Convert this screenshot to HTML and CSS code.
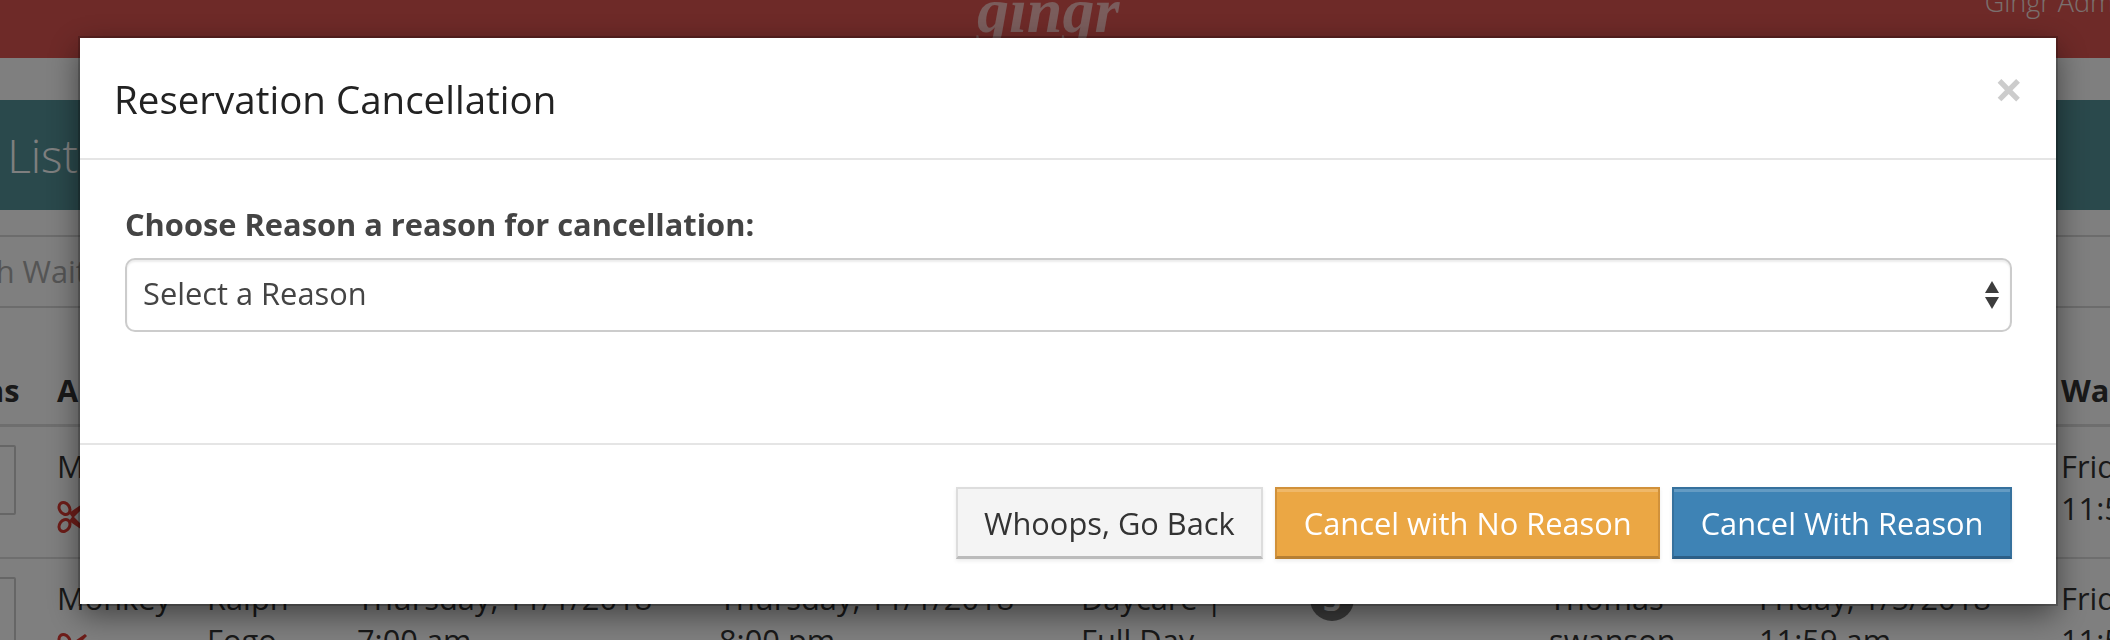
FILE: index.html
```html
<!DOCTYPE html>
<html lang="en">
	<head>
		<meta charset="UTF-8" />
		<meta name="viewport" content="width=device-width, initial-scale=1.0" />
		<title>Reservation Cancellation</title>
		<link rel="stylesheet" href="styles.css">
	</head>
	<body>
		<div class="topbar">
			<span class="logo">gingr</span>
			<span class="user">Gingr Admin</span>
		</div>
		<div class="titlebar"><h1>Wait List</h1></div>
		<div class="search">Search Waitlist</div>

		<div class="row head">
			<div class="lead">Actions</div>
			<div>Animal</div>
			<div>Owner</div>
			<div>Start</div>
			<div>End</div>
			<div>Type</div>
			<div>Count</div>
			<div>Staff</div>
			<div>Expires</div>
			<div>Waitlisted</div>
		</div>
		<div class="row">
			<div><span class="box"></span></div>
			<div>
				Monkey
				<svg class="cut" viewBox="0 0 30 32"><use href="#scissors"></use></svg>
			</div>
			<div>Ralph<br>Fogo</div>
			<div>Thursday, 11/1/2018<br>7:00 am</div>
			<div>Thursday, 11/1/2018<br>8:00 pm</div>
			<div>Daycare |<br>Full Day</div>
			<div><span class="badge">3</span></div>
			<div>Thomas<br>swanson</div>
			<div>Friday, 1/5/2018<br>11:59 am</div>
			<div>Friday<br>11:59 am</div>
		</div>
		<div class="row">
			<div><span class="box"></span></div>
			<div>
				Monkey
				<svg class="cut" viewBox="0 0 30 32"><use href="#scissors"></use></svg>
			</div>
			<div>Ralph<br>Fogo</div>
			<div>Thursday, 11/1/2018<br>7:00 am</div>
			<div>Thursday, 11/1/2018<br>8:00 pm</div>
			<div>Daycare |<br>Full Day</div>
			<div><span class="badge">3</span></div>
			<div>Thomas<br>swanson</div>
			<div>Friday, 1/5/2018<br>11:59 am</div>
			<div>Friday<br>11:59 am</div>
		</div>

		<svg class="defs" width="0" height="0">
			<symbol id="scissors" viewBox="0 0 30 32">
				<g fill="none" stroke="currentColor" stroke-width="3">
					<ellipse cx="7.5" cy="7.5" rx="5" ry="6.4" transform="rotate(-35 7.5 7.5)"></ellipse>
					<ellipse cx="7.5" cy="24.5" rx="5" ry="6.4" transform="rotate(35 7.5 24.5)"></ellipse>
				</g>
				<path fill="currentColor" d="M12 12 L28 1 L30 3 L17 16 L30 29 L28 31 L12 20 L15 16 Z"></path>
			</symbol>
		</svg>

		<div class="backdrop">
			<div class="modal">
				<div class="modal-header">
					<h4>Reservation Cancellation</h4>
					<span class="close">×</span>
				</div>
				<div class="modal-body">
					<label>Choose Reason a reason for cancellation:</label>
					<div class="select">
						<span>Select a Reason</span>
						<svg class="arrows" viewBox="0 0 14 28">
							<path d="M7 0 L14 12 L0 12 Z"></path>
							<path d="M0 16 L14 16 L7 28 Z"></path>
						</svg>
					</div>
				</div>
				<div class="modal-footer">
					<button class="btn">Whoops, Go Back</button>
					<button class="btn btn-warning">Cancel with No Reason</button>
					<button class="btn btn-primary">Cancel With Reason</button>
				</div>
			</div>
		</div>
	</body>
</html>
```

FILE: styles.css
```css
* {
	box-sizing: border-box;
}
body {
	margin: 0;
	height: 640px;
	overflow: hidden;
	background: #fff;
	color: #333;
	font-family: "Open Sans", sans-serif;
	font-size: 30.8px;
}
.topbar {
	display: flex;
	justify-content: space-between;
	height: 58px;
	padding-left: 977px;
	background: #dd5450;
	overflow: hidden;
}
.logo {
	margin-top: -29px;
	font-family: "Liberation Serif", serif;
	font-size: 64px;
	font-style: italic;
	font-weight: 700;
	line-height: 80px;
	color: #f4bab8;
}
.user {
	margin-top: -16px;
	margin-right: -26px;
	font-size: 27px;
	font-weight: 300;
	line-height: 36px;
	color: #f5e0df;
}
.titlebar {
	height: 110px;
	margin-top: 42px;
	background: #549298;
	overflow: hidden;
}
.titlebar h1 {
	margin: 0 0 0 -96px;
	font-size: 46px;
	font-weight: 300;
	line-height: 110px;
	color: #fff;
}
.search {
	height: 73px;
	margin-top: 25px;
	border-top: 2px solid #d8d8d8;
	border-bottom: 2px solid #d8d8d8;
	text-indent: -83px;
	line-height: 68px;
	color: #aaa;
}
.row {
	display: grid;
	grid-template-columns: 57px 150px 150px 362px 362px 229px 239px 210px 302px 1fr;
	height: 132px;
	padding-top: 18px;
	border-bottom: 2px solid #ddd;
	line-height: 42px;
	white-space: nowrap;
}
.head {
	height: 119px;
	padding-top: 61px;
	border-bottom-width: 3px;
	font-weight: 700;
}
.lead {
	margin-left: -95px;
}
.box {
	display: block;
	width: 100px;
	height: 70px;
	margin-left: -84px;
	border: 2px solid #ccc;
	border-radius: 2px;
}
.cut {
	display: block;
	width: 30px;
	height: 32px;
	margin-top: 14px;
	color: #dc3a32;
}
.badge {
	display: block;
	width: 44px;
	height: 44px;
	border-radius: 50%;
	background: #777;
	color: #fff;
	font-weight: 700;
	line-height: 44px;
	text-align: center;
}
.defs {
	display: block;
	height: 0;
}
.backdrop {
	position: fixed;
	top: 0;
	left: 0;
	width: 100%;
	height: 100%;
	padding: 38px 54px 0 80px;
	background: rgba(0, 0, 0, 0.5);
}
.modal {
	height: 566px;
	background: #fff;
	box-shadow: 0 0 0 2px rgba(0, 0, 0, 0.2), 0 10px 30px rgba(0, 0, 0, 0.5);
}
.modal-header {
	display: flex;
	justify-content: space-between;
	height: 122px;
	padding: 0 33px 0 34px;
	border-bottom: 2px solid #e5e5e5;
}
.modal-header h4 {
	margin: 0;
	font-size: 38.5px;
	font-weight: 400;
	line-height: 123px;
	color: #222;
}
.close {
	margin-top: 26px;
	font-size: 50px;
	font-weight: 700;
	line-height: 50px;
	color: #ccc;
}
.modal-body {
	height: 283px;
	padding: 48px 44px 0 45px;
}
label {
	display: block;
	font-weight: 700;
	line-height: 32px;
	color: #444;
}
.select {
	display: flex;
	justify-content: space-between;
	align-items: center;
	height: 74px;
	margin-top: 18px;
	padding: 0 11px 4px 16px;
	border: 2px solid #ccc;
	border-radius: 10px;
	box-shadow: inset 0 2px 2px rgba(0, 0, 0, 0.08);
	color: #444;
}
.arrows {
	width: 14px;
	height: 28px;
	margin-top: 4px;
	fill: #3d3d3d;
}
.modal-footer {
	display: flex;
	justify-content: flex-end;
	gap: 12px;
	padding: 42px 44px 0 0;
	border-top: 2px solid #e5e5e5;
}
.btn {
	height: 72px;
	padding: 0 26.5px;
	border: 2px solid #ddd;
	border-bottom: 3px solid #bbb;
	background: #f4f4f4;
	box-shadow: 0 2px 4px rgba(0, 0, 0, 0.08);
	color: #333;
	font-family: inherit;
	font-size: 30.8px;
}
.btn-warning {
	border-color: #d1913a;
	border-bottom-color: #b67f33;
	background: #eba744;
	box-shadow: inset 0 3px 0 rgba(255, 255, 255, 0.2), 0 2px 4px rgba(0, 0, 0, 0.08);
	color: #fff;
}
.btn-primary {
	border-color: #36719d;
	border-bottom-color: #2c5f87;
	background: #3e83b5;
	box-shadow: inset 0 3px 0 rgba(255, 255, 255, 0.2), 0 2px 4px rgba(0, 0, 0, 0.08);
	color: #fff;
}
```
